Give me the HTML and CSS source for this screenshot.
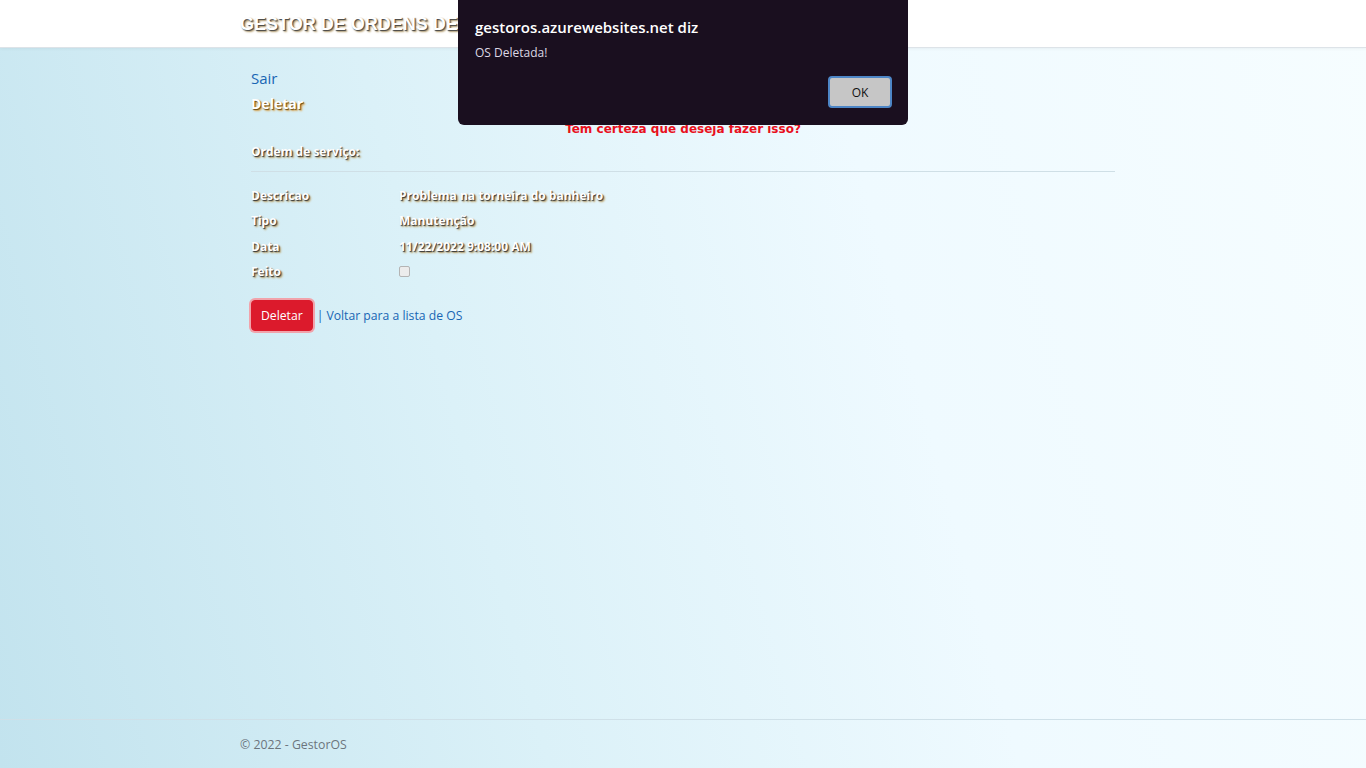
FILE: index.html
```html
<!DOCTYPE html>
<html lang="pt-br">
<head>
<meta charset="utf-8">
<title>Deletar - GestorOS</title>
<link rel="stylesheet" href="styles.css">
</head>
<body>
<header class="topbar">
  <div class="container">
    <span class="brand">GESTOR DE ORDENS DE SERVIÇO</span>
  </div>
</header>
<main class="container main">
  <div class="inner">
    <a class="sair" href="#">Sair</a>
    <h3 class="page-title">Deletar</h3>
    <p class="warn">Tem certeza que deseja fazer isso?</p>
    <h4 class="section">Ordem de serviço:</h4>
    <hr class="rule">
    <dl class="details">
      <dt>Descricao</dt><dd>Problema na torneira do banheiro</dd>
      <dt>Tipo</dt><dd>Manutenção</dd>
      <dt>Data</dt><dd>11/22/2022 9:08:00 AM</dd>
      <dt>Feito</dt><dd><span class="check"></span></dd>
    </dl>
    <div class="actions">
      <button class="btn-del" type="button">Deletar</button>
      <span class="sep">|</span>
      <a class="back" href="#">Voltar para a lista de OS</a>
    </div>
  </div>
</main>
<footer class="footer">
  <div class="container">© 2022 - GestorOS</div>
</footer>

<div class="alert">
  <div class="alert-title">gestoros.azurewebsites.net diz</div>
  <div class="alert-msg">OS Deletada!</div>
  <div class="alert-actions"><button class="alert-ok" type="button">OK</button></div>
</div>
</body>
</html>
```
FILE: styles.css
```css
html, body {
  margin: 0;
  padding: 0;
  height: 100%;
}
body {
  font-family: "Open Sans", "Noto Sans", Arial, sans-serif;
  font-size: 14px;
  color: #212529;
  background: linear-gradient(75deg, #c2e3ee 0%, #dbf1f8 35%, #effaff 65%, #f6fdff 100%);
  display: flex;
  flex-direction: column;
  min-height: 768px;
  position: relative;
  overflow: hidden;
}
.container {
  width: 886px;
  margin: 0 auto;
}
.topbar {
  background: #fff;
  height: 47px;
  border-bottom: 1px solid #dde3e8;
  box-shadow: 0 1px 3px rgba(0,0,0,0.05);
}
.brand {
  display: block;
  padding-top: 14px;
  font-family: "Liberation Sans", Arial, sans-serif;
  font-weight: bold;
  font-size: 18px;
  line-height: 20px;
  color: #fff;
  text-shadow: 1px 1px 1px #444, 2px 2px 2px #b8a070;
}
.main {
  flex: 1;
}
.inner {
  padding: 20px 0 0 11px;
  width: 864px;
}
.sair {
  display: block;
  color: #1866b4;
  text-decoration: none;
  font-size: 15px;
  line-height: 20px;
}
.page-title {
  margin: 7px 0 0;
  font-size: 14px;
  line-height: 18px;
  color: #fff;
  font-weight: bold;
  text-shadow: 1px 1px 1px #6a4a10, 2px 2px 2px #e0a850;
}
.warn {
  margin: 8px 0 0;
  text-align: center;
  font-family: "DejaVu Sans", Verdana, sans-serif;
  font-weight: bold;
  font-size: 12px;
  line-height: 16px;
  color: #e8101c;
}
.section, .details dt, .details dd {
  color: #fff;
  font-weight: bold;
  font-size: 12px;
  text-shadow: 1px 1px 1px #333, 2px 2px 2px #c0a060;
}
.section {
  margin: 6px 0 0;
  line-height: 18px;
}
.rule {
  border: 0;
  border-top: 1px solid #cfdfe6;
  margin: 10px 0 15px;
}
.details {
  display: grid;
  grid-template-columns: 148px 1fr;
  row-gap: 7.3px;
  margin: 0;
}
.details dt, .details dd {
  margin: 0;
  line-height: 18px;
}
.check {
  display: inline-block;
  width: 9px;
  height: 9px;
  border: 1px solid #b4b4b4;
  border-radius: 2px;
  background: #ececec;
  vertical-align: -1px;
}
.actions {
  margin-top: 19px;
  display: flex;
  align-items: center;
  gap: 3px;
}
.btn-del {
  font-family: inherit;
  font-size: 12.2px;
  color: #fff;
  background: #dc1a2c;
  border: 1px solid #dc1a2c;
  border-radius: 4px;
  padding: 0 9px;
  height: 31px;
  box-shadow: 0 0 0 2px #f1a3ab;
  margin-left: 0;
}
.sep {
  color: #1866b4;
  font-size: 12.2px;
  margin-left: 1px;
}
.back {
  color: #1866b4;
  text-decoration: none;
  font-size: 12.2px;
}
.footer {
  border-top: 1px solid #cfe0e8;
  height: 48px;
  font-size: 12.3px;
  color: #6c757d;
  line-height: 50px;
}
.alert {
  position: absolute;
  top: 0;
  left: 458px;
  width: 450px;
  height: 125px;
  background: #1a0f1f;
  border-radius: 0 0 6px 6px;
  box-sizing: border-box;
  padding: 17px 16px 0 17px;
  color: #fff;
  font-family: "Open Sans", "Noto Sans", sans-serif;
}
.alert-title {
  font-size: 15px;
  font-weight: 600;
  line-height: 20px;
}
.alert-msg {
  margin-top: 8px;
  font-size: 12px;
  color: #ddd8e4;
  line-height: 16px;
}
.alert-actions {
  display: flex;
  justify-content: flex-end;
  margin-top: 15px;
}
.alert-ok {
  width: 64px;
  height: 32px;
  background: #c6c6c6;
  border: 2px solid #4d86c6;
  border-radius: 4px;
  font-family: inherit;
  font-size: 12px;
  color: #111;
}
```
